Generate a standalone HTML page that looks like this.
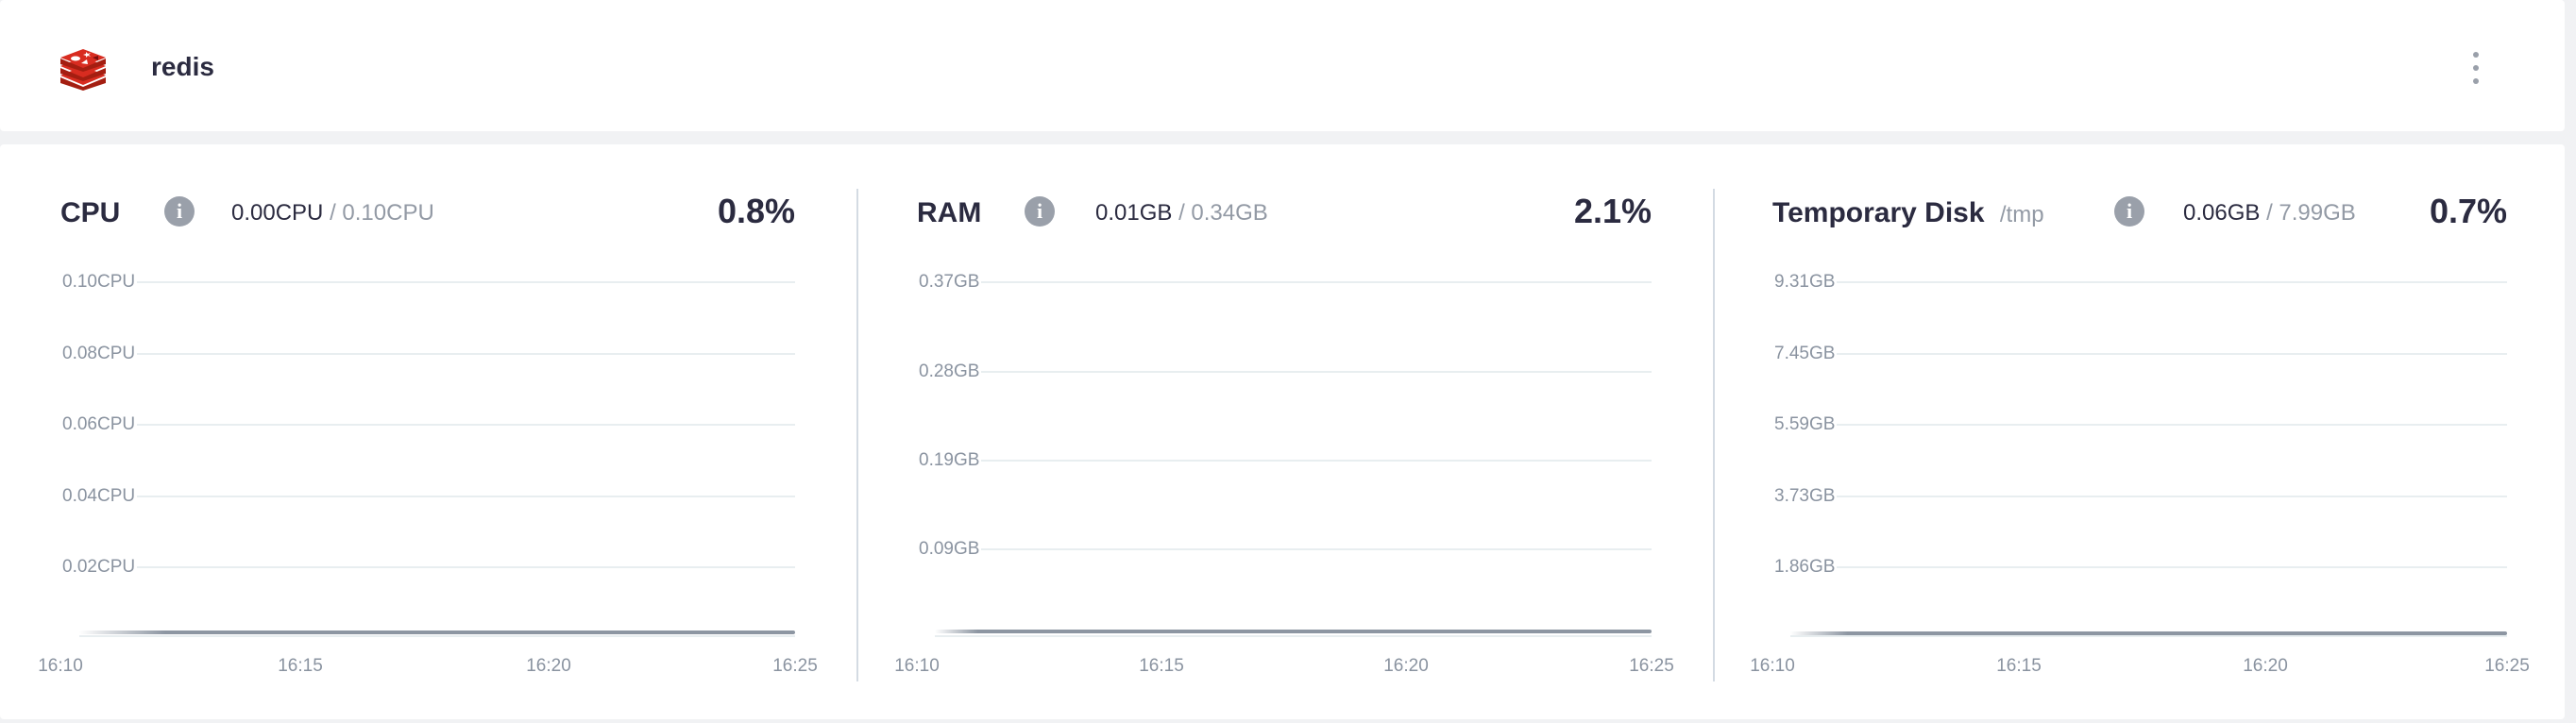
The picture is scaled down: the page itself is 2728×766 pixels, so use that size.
<!DOCTYPE html>
<html><head><meta charset="utf-8"><style>
*{margin:0;padding:0;box-sizing:border-box}
body{width:2728px;height:766px;background:#f1f2f4;font-family:"Liberation Sans",sans-serif;position:relative;overflow:hidden;color:#2b2b40}
.card{position:absolute;background:#fff;left:0;width:2716px;border-radius:4px}
.a{position:absolute;white-space:nowrap}
.t{font-weight:bold;font-size:30px;line-height:30px}
.v{font-size:24px;line-height:24px}
.v span{color:#939aa5}
.p{font-weight:bold;font-size:36px;line-height:36px}
.info{width:32px;height:32px;border-radius:50%;background:#9aa0aa;color:#fff;font-weight:bold;font-size:22px;line-height:32px;text-align:center;font-family:"Liberation Serif",serif}
.g{position:absolute;height:2px;background:#e8eef0}
.l{position:absolute;font-size:19px;line-height:19px;color:#8a93a0;background:#fff;padding-right:2px}
.x{position:absolute;font-size:19px;color:#8a93a0;line-height:19px;transform:translateX(-50%)}
.d{position:absolute;width:2px;background:#d4dbe3;top:200px;height:522px}
.ln{position:absolute;height:4px;background:#8d96a2;border-radius:2px}
</style></head><body>
<div class="card" style="top:0;height:139px"></div>
<div class="card" style="top:153px;height:609px"></div>
<svg class="a" style="left:62px;top:52px" width="52" height="44" viewBox="0 0 52 44">
<path d="M2 30 L26 40 L50 30 L50 36 L26 44 L2 36Z" fill="#a41e11"/>
<path d="M2 28 L26 18 L50 28 L26 38Z" fill="#d82c20"/>
<path d="M2 20 L26 30 L50 20 L50 26 L26 34 L2 26Z" fill="#a41e11"/>
<path d="M2 18 L26 8 L50 18 L26 28Z" fill="#d82c20"/>
<path d="M2 10 L26 20 L50 10 L50 16 L26 24 L2 16Z" fill="#a41e11"/>
<path d="M2 9 L26 0 L50 9 L26 18Z" fill="#d82c20"/>
<ellipse cx="18" cy="10" rx="5" ry="2.5" fill="#fff"/>
<path d="M29 3 l2 2 l3 -1 l-2 2 l2 2 l-3 -1 l-2 2 l0 -2 l-3 -1 l3 -1z" fill="#fff"/>
<path d="M24 15 l6 -4 l1 5z" fill="#fff"/>
<path d="M36 9 l6 -2 l0 5z" fill="#7a0c0c"/>
</svg>
<div class="a" style="left:160px;top:56px;font-size:28px;font-weight:bold;line-height:30px">redis</div>
<svg class="a" style="left:2616px;top:54px" width="12" height="36"><circle cx="6" cy="4" r="3" fill="#9aa0aa"/><circle cx="6" cy="18" r="3" fill="#9aa0aa"/><circle cx="6" cy="32" r="3" fill="#9aa0aa"/></svg>

<!-- CPU -->
<div class="a t" style="left:64px;top:211px">CPU</div>
<div class="a info" style="left:174px;top:208px">i</div>
<div class="a v" style="left:245px;top:214px">0.00CPU <span>/ 0.10CPU</span></div>
<div class="a p" style="right:1886px;top:206px">0.8%</div>
<div class="g" style="left:66px;width:776px;top:298px"></div><div class="l" style="left:66px;top:289px">0.10CPU</div>
<div class="g" style="left:66px;width:776px;top:374px"></div><div class="l" style="left:66px;top:365px">0.08CPU</div>
<div class="g" style="left:66px;width:776px;top:449px"></div><div class="l" style="left:66px;top:440px">0.06CPU</div>
<div class="g" style="left:66px;width:776px;top:525px"></div><div class="l" style="left:66px;top:516px">0.04CPU</div>
<div class="g" style="left:66px;width:776px;top:600px"></div><div class="l" style="left:66px;top:591px">0.02CPU</div>
<div class="g" style="left:84px;width:758px;top:673px"></div>
<div class="ln" style="left:84px;width:758px;top:668px;background:linear-gradient(90deg,#fff,#8d96a2 12%)"></div>
<div class="x" style="left:64px;top:696px">16:10</div><div class="x" style="left:318px;top:696px">16:15</div><div class="x" style="left:581px;top:696px">16:20</div><div class="x" style="left:842px;top:696px">16:25</div>
<div class="d" style="left:907px"></div>

<!-- RAM -->
<div class="a t" style="left:971px;top:211px">RAM</div>
<div class="a info" style="left:1085px;top:208px">i</div>
<div class="a v" style="left:1160px;top:214px">0.01GB <span>/ 0.34GB</span></div>
<div class="a p" style="right:979px;top:206px">2.1%</div>
<div class="g" style="left:973px;width:776px;top:298px"></div><div class="l" style="left:973px;top:289px">0.37GB</div>
<div class="g" style="left:973px;width:776px;top:393px"></div><div class="l" style="left:973px;top:384px">0.28GB</div>
<div class="g" style="left:973px;width:776px;top:487px"></div><div class="l" style="left:973px;top:478px">0.19GB</div>
<div class="g" style="left:973px;width:776px;top:581px"></div><div class="l" style="left:973px;top:572px">0.09GB</div>
<div class="g" style="left:990px;width:759px;top:673px"></div>
<div class="ln" style="left:990px;width:759px;top:667px;background:linear-gradient(90deg,#fff,#8d96a2 6%)"></div>
<div class="x" style="left:971px;top:696px">16:10</div><div class="x" style="left:1230px;top:696px">16:15</div><div class="x" style="left:1489px;top:696px">16:20</div><div class="x" style="left:1749px;top:696px">16:25</div>
<div class="d" style="left:1814px"></div>

<!-- Disk -->
<div class="a t" style="left:1877px;top:211px">Temporary Disk <span style="font-weight:normal;font-size:24px;color:#939aa5;margin-left:8px">/tmp</span></div>
<div class="a info" style="left:2239px;top:208px">i</div>
<div class="a v" style="left:2312px;top:214px">0.06GB <span>/ 7.99GB</span></div>
<div class="a p" style="right:73px;top:206px">0.7%</div>
<div class="g" style="left:1879px;width:776px;top:298px"></div><div class="l" style="left:1879px;top:289px">9.31GB</div>
<div class="g" style="left:1879px;width:776px;top:374px"></div><div class="l" style="left:1879px;top:365px">7.45GB</div>
<div class="g" style="left:1879px;width:776px;top:449px"></div><div class="l" style="left:1879px;top:440px">5.59GB</div>
<div class="g" style="left:1879px;width:776px;top:525px"></div><div class="l" style="left:1879px;top:516px">3.73GB</div>
<div class="g" style="left:1879px;width:776px;top:600px"></div><div class="l" style="left:1879px;top:591px">1.86GB</div>
<div class="g" style="left:1896px;width:759px;top:673px"></div>
<div class="ln" style="left:1896px;width:759px;top:669px;background:linear-gradient(90deg,#fff,#8d96a2 8%)"></div>
<div class="x" style="left:1877px;top:696px">16:10</div><div class="x" style="left:2138px;top:696px">16:15</div><div class="x" style="left:2399px;top:696px">16:20</div><div class="x" style="left:2655px;top:696px">16:25</div>
</body></html>
